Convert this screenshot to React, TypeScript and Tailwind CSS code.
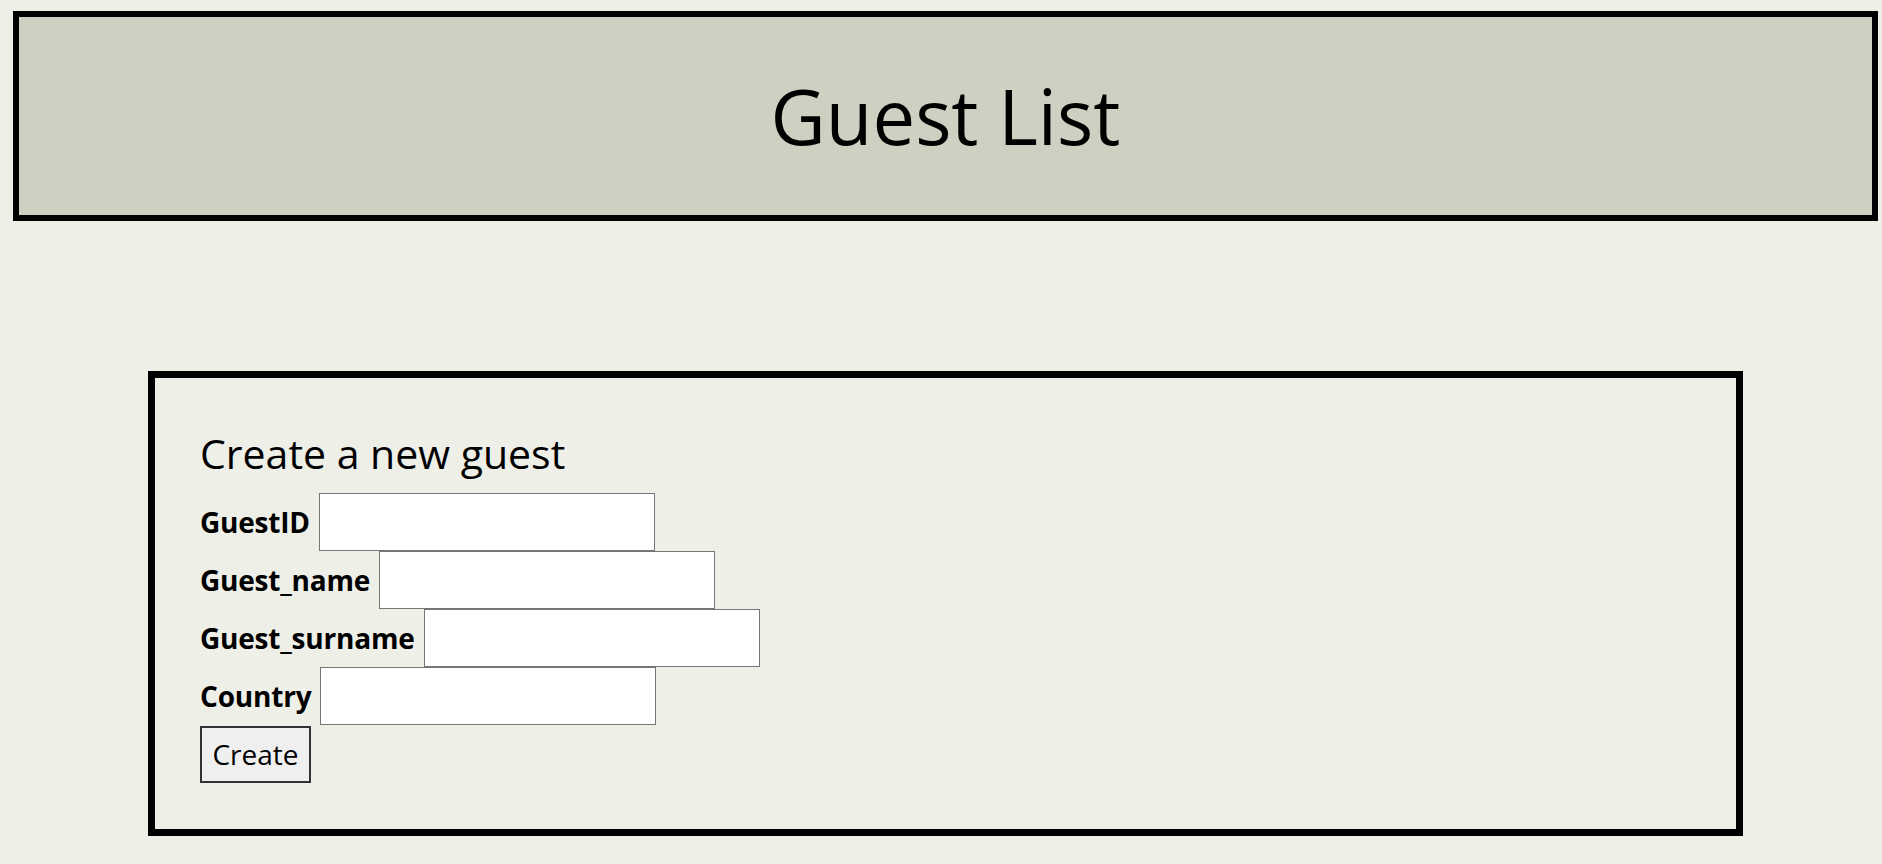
import React from 'react';

const fields = ['GuestID', 'Guest_name', 'Guest_surname', 'Country'];

export default function App() {
  return (
    <div className="min-h-[864px] bg-[#eeefe7] pt-[11px] pb-[29px] text-black [font-family:'Open_Sans',sans-serif]">
      <header className="ml-[13px] flex h-[210px] w-[1865px] items-center justify-center border-[6px] border-black bg-[#cfd0c2]">
        <h1 className="text-[76px] font-normal leading-none">Guest List</h1>
      </header>

      <section className="ml-[148px] mt-[150px] w-[1595px] border-[7px] border-black pt-[55px] pb-[46px] pl-[45px]">
        <h3 className="text-[41px] font-normal leading-none">Create a new guest</h3>
        <form className="mt-[19px] flex flex-col" onSubmit={(e) => e.preventDefault()}>
          {fields.map((name) => (
            <div key={name} className="flex h-[58px] items-center">
              <label className="text-[28px] font-bold leading-none tracking-[-0.2px]">{name}</label>
              <input
                type="text"
                className="ml-[9px] h-[58px] w-[336px] border border-[#767676] bg-white"
              />
            </div>
          ))}
          <div className="flex h-[58px] items-center">
            <button
              type="submit"
              className="h-[57px] w-[111px] border-2 border-[#333] bg-[#efefef] text-[28px] leading-none"
            >
              Create
            </button>
          </div>
        </form>
      </section>
    </div>
  );
}
